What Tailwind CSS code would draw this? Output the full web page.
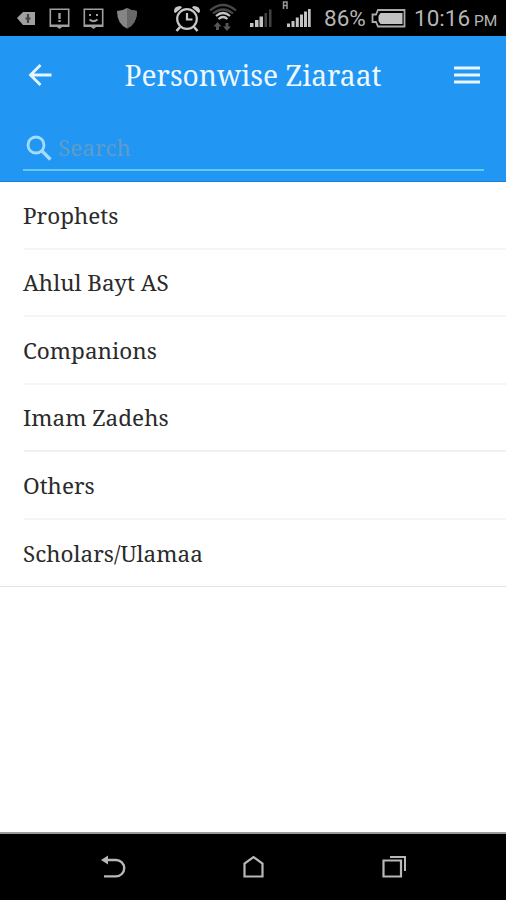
<!DOCTYPE html>
<html lang="en">

<head>
    <meta charset="UTF-8">
    <meta name="viewport" content="width=device-width, initial-scale=1.0">
    <title>Personwise Ziaraat</title>
    <script src="https://cdn.jsdelivr.net/npm/@tailwindcss/browser@4"></script>
</head>

<body class="flex h-screen flex-col overflow-hidden bg-white font-['Noto_Serif','DejaVu_Serif_Condensed','DejaVu_Serif',serif]">
    <!-- status bar -->
    <div class="flex h-9 shrink-0 items-center bg-black pl-4 font-['Roboto',sans-serif] text-[22px] leading-none text-[#b5b5b5]">
        <svg class="h-9 w-[20px]" viewBox="0 0 20 36">
            <path d="M1 18l6-6h12v13H7z" fill="#a0a0a0" />
            <path d="M12 14v9M9.500 18.500h5" stroke="#444" stroke-width="2.200" />
        </svg>
        <svg class="ml-[13px] h-9 w-[21px]" viewBox="0 0 21 36" fill="none" stroke="#a0a0a0" stroke-width="1.6">
            <path d="M1.3 9.2h18.4v17H1.3z" />
            <path d="M1 25.5h19M8.5 26l2 1.500 2-1.500" stroke-width="2.2" />
            <path d="M10.5 13v6M10.5 20v2" stroke-width="2.4" />
        </svg>
        <svg class="ml-[13px] h-9 w-[21px]" viewBox="0 0 21 36" fill="none" stroke="#a0a0a0" stroke-width="1.6">
            <path d="M1.3 9.2h18.4v17H1.3z" />
            <path d="M1 25.5h19M8.5 26l2 1.500 2-1.500" stroke-width="2.2" />
            <path d="M6 15h2M13 15h2M6.5 19.5q4 3.5 8 0" stroke-width="1.8" />
        </svg>
        <svg class="ml-[12px] h-9 w-[22px]" viewBox="0 0 22 36">
            <path d="M11 8q5 3 10 3 0 13-10 17.500Q1 24 1 11q5 0 10-3z" fill="#858585" />
            <path d="M11 8q5 3 10 3 0 13-10 17.500z" fill="#686868" />
        </svg>
        <svg class="ml-[35px] h-9 w-[28px]" viewBox="0 0 28 36" fill="none" stroke="#c8c8c8" stroke-width="2.2">
            <circle cx="14" cy="19" r="9.800" />
            <path d="M14 13v6.500h5.500" />
            <path d="M7 27l-3.500 4M21 27l3.500 4" stroke-width="2.600" />
            <path d="M1 12Q.5 6 7.500 6L9 7.500 2.500 13zM27 12Q27.500 6 20.500 6L19 7.500 25.500 13z" fill="#c8c8c8" stroke="none" />
        </svg>
        <svg class="ml-[7px] h-9 w-[30px]" viewBox="0 0 30 36" fill="none">
            <path d="M2 10.500q13-11 26 0M5 13.500q10-8 20 0" stroke="#484848" stroke-width="2.200" />
            <path d="M8 16q7-6 14 0M10.500 19q4.500-4 9 0" stroke="#c4c4c4" stroke-width="2.200" />
            <path d="M9.500 22l4 4.500H11V30H8v-3.500H5.500zM19 31l4-4.500h-2.500V23h-3v3.500H15z" fill="#555" />
        </svg>
        <svg class="ml-[11px] h-9 w-[24px]" viewBox="0 0 24 36">
            <path d="M1 23h3.500v4H1zM6 20h3.500v7H6zM10.500 16.500H14V27h-3.500z" fill="#c4c4c4" />
            <path d="M15.500 13H18v14h-2.500zM20 9.500h2.500V27H20z" fill="#424242" />
        </svg>
        <svg class="ml-[8px] h-9 w-[32px]" viewBox="0 0 32 36">
            <path d="M2.500 9V2h3.500v7M2.500 5.500H6" fill="none" stroke="#999" stroke-width="1.500" />
            <path d="M6 23.500h3V27H6zM10.500 21h3v6h-3zM14.800 17.500h3V27h-3zM19 14.500h3V27h-3zM23 11.500h3V27h-3zM27 9h2.700v18H27z" fill="#c4c4c4" />
        </svg>
        <span class="ml-[11px] w-[47px] whitespace-nowrap pt-px text-[22.500px]">86%</span>
        <svg class="h-9 w-[36px]" viewBox="0 0 36 36">
            <path d="M7 10h26.500v16.500H7L5 22H1.500v-7.500H5z" fill="none" stroke="#aaa" stroke-width="1.800" />
            <path d="M9.500 13h22v11h-22L7.500 21v-5z" fill="#c2c2c2" />
        </svg>
        <span class="ml-[7px] flex items-baseline whitespace-nowrap pt-px text-[22.500px]">10:16<span class="ml-1 text-[15.500px]">PM</span></span>
    </div>

    <!-- header -->
    <header class="flex h-[146px] shrink-0 flex-col border-b border-[#1483dd] bg-[#2196f3] px-[23px]">
        <div class="flex h-[78px] items-center justify-between">
            <svg class="ml-[5px] h-6 w-6" viewBox="0 0 24 24" fill="none" stroke="#e8f6ff" stroke-width="2.800">
                <path d="M23.500 12H3M12.500 2L2.500 12l10 10" />
            </svg>
            <h1 class="w-[256px] whitespace-nowrap text-[28.200px] text-[#eef9ff]">Personwise Ziaraat</h1>
            <svg class="mr-[2px] h-6 w-[28px]" viewBox="0 0 28 24" stroke="#e8f6ff" stroke-width="3">
                <path d="M1 5h26M1 12h26M1 19h26" />
            </svg>
        </div>
        <div class="mt-[13px] mr-[-1px] flex h-[44px] items-center border-b-2 border-[#64c8fb]">
            <svg class="ml-[3px] h-[26px] w-[26px]" viewBox="0 0 26 26" fill="none" stroke="#a5dcfa" stroke-width="2.800">
                <circle cx="10" cy="10" r="8" />
                <path d="M16 16l8.500 8.500" stroke-width="3.400" />
            </svg>
            <span class="ml-[6px] text-[22.500px] text-[#5d9ccb]">Search</span>
        </div>
    </header>

    <!-- list -->
    <ul class="shrink-0 border-b border-[#e4e4e4] text-[22.500px] text-[#2b2b2b]">
        <li class="ml-6 flex h-[67.500px] items-center border-b-2 border-[#f5f5f5]"><span class="-ml-px pt-0.5">Prophets</span></li>
        <li class="ml-6 flex h-[67.500px] items-center border-b-2 border-[#f5f5f5]"><span class="-ml-px pt-0.5">Ahlul Bayt AS</span></li>
        <li class="ml-6 flex h-[67.500px] items-center border-b-2 border-[#f5f5f5]"><span class="-ml-px pt-0.5">Companions</span></li>
        <li class="ml-6 flex h-[67.500px] items-center border-b-2 border-[#f0f0f0]"><span class="-ml-px pt-0.5">Imam Zadehs</span></li>
        <li class="ml-6 flex h-[67.500px] items-center border-b-2 border-[#f5f5f5]"><span class="-ml-px pt-0.5">Others</span></li>
        <li class="ml-6 flex h-[66.500px] items-center"><span class="-ml-px pt-0.5">Scholars/Ulamaa</span></li>
    </ul>

    <!-- navigation bar -->
    <nav class="mt-auto flex h-[68px] shrink-0 items-center border-t-2 border-[#9b9b9b] bg-black pl-[100px]">
        <svg class="h-7 w-[26px]" viewBox="0 0 26 28" fill="none" stroke="#b8b8b8" stroke-width="2.400">
            <path d="M7 7h9a8.200 8.200 0 0 1 0 16.400H4" />
            <path d="M1 7l7-4.500v9z" fill="#b8b8b8" stroke="none" />
        </svg>
        <svg class="ml-[115px] h-7 w-[24px]" viewBox="0 0 24 28" fill="none" stroke="#b8b8b8" stroke-width="2.200">
            <path d="M3.500 23.500V10.500L12.500 4l9 6.500v13z" />
        </svg>
        <svg class="ml-[116px] h-7 w-[26px]" viewBox="0 0 26 28" fill="none" stroke="#b8b8b8" stroke-width="2.200">
            <path d="M2.500 7.500H20v16H2.500z" />
            <path d="M9 4h15v14" stroke-width="2" />
        </svg>
    </nav>
</body>

</html>
